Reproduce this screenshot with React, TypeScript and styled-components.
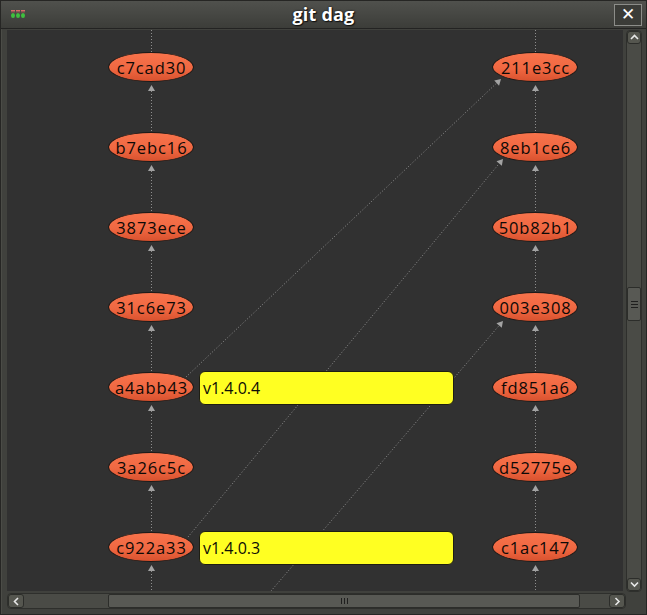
import React from "react";
import styled, { createGlobalStyle } from "styled-components";

const Global = createGlobalStyle`
  html, body { margin: 0; padding: 0; background: #2a2a28; }
  body { width: 647px; height: 615px; overflow: hidden; }
`;

const CANVAS_X = 7;
const CANVAS_Y = 30;
const CANVAS_W = 616;
const CANVAS_H = 561;
const LEFT_X = 151;
const RIGHT_X = 535;
const ROW_Y = (i: number) => 67 + i * 80;
const RX = 43;
const RY = 15;

const leftNodes = ["c7cad30", "b7ebc16", "3873ece", "31c6e73", "a4abb43", "3a26c5c", "c922a33"];
const rightNodes = ["211e3cc", "8eb1ce6", "50b82b1", "003e308", "fd851a6", "d52775e", "c1ac147"];
const tags = [
  { row: 4, label: "v1.4.0.4" },
  { row: 6, label: "v1.4.0.3" },
];
const diagonals = [
  { x1: 186, y1: 377, x2: 501, y2: 79 },
  { x1: 188, y1: 537, x2: 503, y2: 159 },
  { x1: 265, y1: 598, x2: 503, y2: 321 },
];

const Window = styled.div`
  width: 647px;
  height: 615px;
  box-sizing: border-box;
  display: flex;
  flex-direction: column;
  background: #40413d;
  border: 1px solid #262624;
  font-family: "Open Sans", "DejaVu Sans", sans-serif;
`;

const TitleBar = styled.div`
  height: 27px;
  flex: none;
  display: grid;
  grid-template-columns: 1fr auto 1fr;
  align-items: center;
  background: linear-gradient(#50514d, #3c3d39);
  border-bottom: 1px solid #232322;
`;

const Title = styled.div`
  color: #ffffff;
  font-weight: 700;
  font-size: 18px;
  letter-spacing: 0.2px;
  text-shadow: 1px 1px 1px #111, 0 0 2px #111;
  line-height: 27px;
`;

const IconSlot = styled.div`
  display: flex;
  align-items: center;
  padding-left: 9px;
`;

const CloseSlot = styled.div`
  display: flex;
  justify-content: flex-end;
  padding-right: 4px;
`;

const CloseButton = styled.div`
  width: 26px;
  height: 20px;
  border: 1px solid #8c8d89;
  background: #3b3c38;
  color: #fff;
  display: flex;
  align-items: center;
  justify-content: center;
  font-family: "DejaVu Sans", sans-serif;
  font-weight: 700;
  font-size: 17px;
  line-height: 1;
`;

const Body = styled.div`
  flex: 1;
  display: grid;
  grid-template-columns: ${CANVAS_W}px 16px;
  grid-template-rows: ${CANVAS_H}px 16px;
  column-gap: 3px;
  row-gap: 2px;
  padding: 1px 0 0 5px;
  border-left: 1px solid #4b4c47;
`;

const Canvas = styled.div`
  position: relative;
  overflow: hidden;
  background: #313131;
`;

const Edges = styled.svg`
  position: absolute;
  inset: 0;
`;

const Node = styled.div.attrs<{ $x: number; $y: number }>((p) => ({
  style: { left: p.$x - RX - CANVAS_X, top: p.$y - RY - CANVAS_Y },
}))<{ $x: number; $y: number }>`
  position: absolute;
  width: ${RX * 2}px;
  height: ${RY * 2}px;
  box-sizing: border-box;
  border: 1px solid #1c1a18;
  border-radius: 50%;
  background: linear-gradient(#f7734b 0%, #f06842 55%, #d9522f 100%);
  display: flex;
  align-items: center;
  justify-content: center;
  color: #0d0906;
  font-size: 16.5px;
  letter-spacing: 0.9px;
  padding-left: 1px;
`;

const Tag = styled.div.attrs<{ $y: number }>((p) => ({
  style: { top: p.$y - 16 - CANVAS_Y },
}))<{ $y: number }>`
  position: absolute;
  left: ${199 - CANVAS_X}px;
  width: 255px;
  height: 34px;
  box-sizing: border-box;
  background: #ffff22;
  border: 1px solid #1e1e12;
  border-radius: 6px;
  display: flex;
  align-items: center;
  padding-left: 3px;
  color: #0d0d06;
  font-size: 16px;
`;

const VScroll = styled.div`
  display: flex;
  flex-direction: column;
  background: #4a4b46;
  border: 1px solid #2e2f2c;
  border-radius: 4px;
  height: 562px;
  box-sizing: border-box;
`;

const HScroll = styled.div`
  display: flex;
  background: #4a4b46;
  border: 1px solid #2e2f2c;
  border-radius: 4px;
  width: 619px;
  box-sizing: border-box;
`;

const ScrollButton = styled.div<{ $h?: boolean }>`
  flex: none;
  width: ${(p) => (p.$h ? "14px" : "auto")};
  height: ${(p) => (p.$h ? "auto" : "11px")};
  background: #55564f;
  border: 1px solid #2c2d2a;
  border-radius: 3px;
  display: flex;
  align-items: center;
  justify-content: center;
`;

const Trough = styled.div<{ $h?: boolean }>`
  flex: 1;
  position: relative;
  display: flex;
  flex-direction: ${(p) => (p.$h ? "row" : "column")};
`;

const Spacer = styled.div<{ $size: number; $h?: boolean }>`
  flex: none;
  ${(p) => (p.$h ? `width: ${p.$size}px;` : `height: ${p.$size}px;`)}
`;

const Thumb = styled.div<{ $size: number; $h?: boolean }>`
  flex: none;
  ${(p) => (p.$h ? `width: ${p.$size}px;` : `height: ${p.$size}px;`)}
  background: #585954;
  border: 1px solid #2c2d2a;
  border-radius: 2px;
  box-sizing: border-box;
  display: flex;
  align-items: center;
  justify-content: center;
  flex-direction: ${(p) => (p.$h ? "row" : "column")};
  gap: 2px;
`;

const Grip = styled.div<{ $h?: boolean }>`
  background: #1f1f1e;
  ${(p) => (p.$h ? "width: 1px; height: 6px;" : "width: 7px; height: 1px;")}
`;

const Corner = styled.div`
  background: #40413d;
`;

const Chevron = ({ dir }: { dir: "up" | "down" | "left" | "right" }) => {
  const pts: Record<string, string> = {
    up: "1,5 4.5,1.5 8,5",
    down: "1,1.5 4.5,5 8,1.5",
    left: "5,1 1.5,4.5 5,8",
    right: "1.5,1 5,4.5 1.5,8",
  };
  const vertical = dir === "up" || dir === "down";
  return (
    <svg width={vertical ? 9 : 7} height={vertical ? 7 : 9}>
      <polyline points={pts[dir]} fill="none" stroke="#e8e8e8" strokeWidth="1.6" />
    </svg>
  );
};

const AppIcon = () => (
  <svg width="16" height="9" viewBox="0 0 16 9">
    {[1, 6, 11].map((x) => (
      <g key={x}>
        <rect x={x} y="0" width="4" height="1.5" fill="#d86a6a" />
        <rect x={x} y="2" width="4" height="1" fill="#6a4a4a" />
        <ellipse cx={x + 2} cy="5.5" rx="2" ry="2.5" fill="#3fbf3f" />
      </g>
    ))}
  </svg>
);

const arrowHead = (x: number, y: number, ang: number, key: string) => {
  const len = 6;
  const hw = 3.5;
  const bx = x - Math.cos(ang) * len;
  const by = y - Math.sin(ang) * len;
  const px = -Math.sin(ang) * hw;
  const py = Math.cos(ang) * hw;
  return (
    <polygon
      key={key}
      points={`${x},${y} ${bx + px},${by + py} ${bx - px},${by - py}`}
      fill="#a3a3a3"
    />
  );
};

const DOT = { stroke: "#8e8e8e", strokeWidth: 1, strokeDasharray: "1 2", fill: "none" };

const EdgeLayer = () => {
  const items: React.ReactNode[] = [];
  [LEFT_X, RIGHT_X].forEach((cx, c) => {
    const x = cx + 0.5;
    items.push(<line key={`top${c}`} x1={x} x2={x} y1={CANVAS_Y} y2={ROW_Y(0) - RY} {...DOT} />);
    for (let i = 0; i < 7; i++) {
      const cy = ROW_Y(i);
      const tip = cy + RY + 3;
      items.push(arrowHead(x, tip, -Math.PI / 2, `a${c}${i}`));
      const end = i < 6 ? ROW_Y(i + 1) - RY : CANVAS_Y + CANVAS_H;
      items.push(<line key={`l${c}${i}`} x1={x} x2={x} y1={tip + 6} y2={end} {...DOT} />);
    }
  });
  diagonals.forEach((d, i) => {
    const ang = Math.atan2(d.y2 - d.y1, d.x2 - d.x1);
    const ex = d.x2 - Math.cos(ang) * 6;
    const ey = d.y2 - Math.sin(ang) * 6;
    items.push(<line key={`d${i}`} x1={d.x1} y1={d.y1} x2={ex} y2={ey} {...DOT} />);
    items.push(arrowHead(d.x2, d.y2, ang, `da${i}`));
  });
  return (
    <Edges
      width={CANVAS_W}
      height={CANVAS_H}
      viewBox={`${CANVAS_X} ${CANVAS_Y} ${CANVAS_W} ${CANVAS_H}`}
    >
      {items}
    </Edges>
  );
};

export default function App() {
  return (
    <>
      <Global />
      <Window>
        <TitleBar>
          <IconSlot>
            <AppIcon />
          </IconSlot>
          <Title>git dag</Title>
          <CloseSlot>
            <CloseButton>✕</CloseButton>
          </CloseSlot>
        </TitleBar>
        <Body>
          <Canvas>
            <EdgeLayer />
            {leftNodes.map((n, i) => (
              <Node key={n} $x={LEFT_X} $y={ROW_Y(i)}>
                {n}
              </Node>
            ))}
            {rightNodes.map((n, i) => (
              <Node key={n} $x={RIGHT_X} $y={ROW_Y(i)}>
                {n}
              </Node>
            ))}
            {tags.map((t) => (
              <Tag key={t.label} $y={ROW_Y(t.row)}>
                {t.label}
              </Tag>
            ))}
          </Canvas>
          <VScroll>
            <ScrollButton>
              <Chevron dir="up" />
            </ScrollButton>
            <Trough>
              <Spacer $size={243} />
              <Thumb $size={34}>
                <Grip />
                <Grip />
                <Grip />
              </Thumb>
            </Trough>
            <ScrollButton>
              <Chevron dir="down" />
            </ScrollButton>
          </VScroll>
          <HScroll>
            <ScrollButton $h>
              <Chevron dir="left" />
            </ScrollButton>
            <Trough $h>
              <Spacer $size={84} $h />
              <Thumb $size={472} $h>
                <Grip $h />
                <Grip $h />
                <Grip $h />
              </Thumb>
            </Trough>
            <ScrollButton $h>
              <Chevron dir="right" />
            </ScrollButton>
          </HScroll>
          <Corner />
        </Body>
      </Window>
    </>
  );
}
